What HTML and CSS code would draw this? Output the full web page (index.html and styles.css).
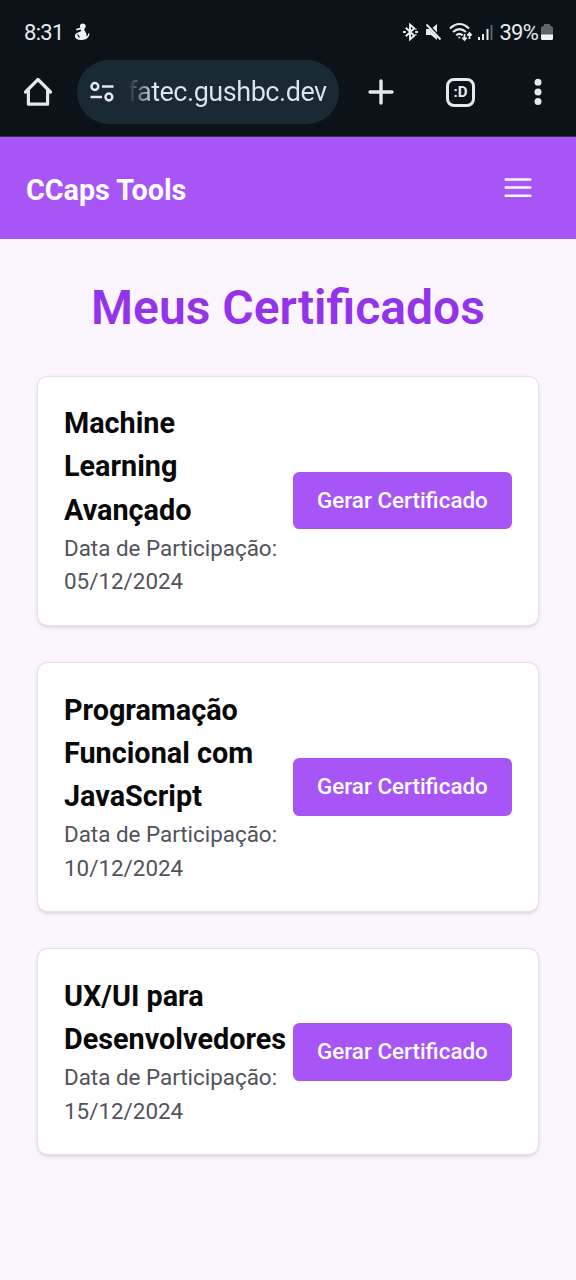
FILE: index.html
```html
<!DOCTYPE html>
<html lang="pt-BR">
<head>
<meta charset="utf-8">
<title>Meus Certificados</title>
<link rel="stylesheet" href="styles.css">
</head>
<body>
<div class="chrome">
  <div class="status">
    <span class="clock">8:31</span>
    <svg class="notif" width="16" height="18" viewBox="0 0 16 18" fill="#eef3f6"><circle cx="8.800" cy="3.200" r="2.800"/><path d="M6.500 4.500 2 6l.5 1.500L6.500 6.500 7.500 8 4 9.500C1.500 10 .5 12 1 14c.5 2 3 3 6 3 5 0 8-2 8.500-6.500l-1.200-.3C14 12 13.500 13 12.500 13.500c.5-3-1-4-2-6L10 5z"/><path d="m3.500 11.500 2 3" stroke="#0b1318" stroke-width="1.200"/></svg>
    <div class="indicators">
      <svg width="15" height="18" viewBox="0 0 16 18" fill="none" stroke="#e6ebef" stroke-width="2.100"><path d="m3 4.500 9 8.500-4.500 3.800V1.200L12 5l-9 8.500"/><path d="M0 9h3M13 9h3M13.500 5.500v1M13.500 11.500v1"/></svg>
      <svg width="17" height="18" viewBox="0 0 17 18"><path fill="#e6ebef" d="M1 6h5l6-5v16l-6-5H1z"/><path d="M1 0 17 17" stroke="#0b1318" stroke-width="3"/><path d="m1.500 1.500 14 15" stroke="#e6ebef" stroke-width="1.900"/></svg>
      <svg width="24" height="19" viewBox="0 0 24 19" fill="none" stroke="#e6ebef" stroke-width="2.100"><path d="M1 5.500C7-.3 14-.3 20 5.500M4 9c4.500-4 8.500-4 13 0M7.200 12.200c2.300-1.900 4.300-1.900 6.400 0"/><circle cx="10.300" cy="14.500" r="1" fill="#e6ebef" stroke="none"/><path stroke-width="1.700" d="M15.500 11v6m-2.200-2.300 2.200 2.300 2.200-2.300M20.500 16v-6m-2.200 2.300 2.200-2.300 2.200 2.300"/></svg>
      <svg class="signal" width="15" height="17" viewBox="0 0 15 17" fill="#e6ebef"><path d="M0 13h2v3H0zM4 10h2v6H4zM8.500 5h2v11h-2z"/><path fill="#596168" d="M12.500 1h2v15h-2z"/></svg>
      <span class="percent">39%</span>
      <svg width="12" height="18" viewBox="0 0 12 18"><path fill="#60666b" d="M3 1h6v2h1.500L12 4.500V12H0V4.500L1.500 3H3z"/><path fill="#f2f4f6" d="M0 11.500h12v4Q12 17 10.500 17h-9Q0 17 0 15.500z"/></svg>
    </div>
  </div>
  <div class="toolbar">
    <svg class="home" width="30" height="30" viewBox="0 0 30 30" fill="none" stroke="#e3e9ed" stroke-width="3.200" stroke-linejoin="round" stroke-linecap="round"><path d="M2.500 15 15 2.500 27.500 15M5.400 13.500v13.700h19.200V13.500"/></svg>
    <div class="address">
      <svg width="24" height="22" viewBox="0 0 24 22" fill="none" stroke="#e3e9ed" stroke-width="2.500"><circle cx="4.900" cy="5.500" r="3.400"/><path d="M12 5.500h11.500M.5 16H12"/><circle cx="18.900" cy="16" r="3.400"/></svg>
      <span class="url">fatec.gushbc.dev</span>
    </div>
    <svg class="plus" width="26" height="26" viewBox="0 0 26 26" stroke="#e3e9ed" stroke-width="3.400" stroke-linecap="round"><path d="M13 2v22M2 13h22"/></svg>
    <div class="tabs">:D</div>
    <svg class="dots" width="8" height="28" viewBox="0 0 8 28" fill="#e3e9ed"><circle cx="4" cy="4.200" r="3.500"/><circle cx="4" cy="14" r="3.500"/><circle cx="4" cy="23.600" r="3.500"/></svg>
  </div>
</div>
<header class="navbar">
  <span class="brand">CCaps Tools</span>
  <svg width="28" height="22" viewBox="0 0 28 22" stroke="#fff" stroke-width="2.500" stroke-linecap="round"><path d="M1.700 2.500h24.600M1.700 10.600h24.600M1.700 18.700h24.600"/></svg>
</header>
<main class="content">
  <h1 class="heading">Meus Certificados</h1>
  <div class="cards">
    <section class="card">
      <div class="info"><h2 class="title">Machine Learning Avançado</h2><p class="date">Data de Participação: 05/12/2024</p></div>
      <button class="action">Gerar Certificado</button>
    </section>
    <section class="card">
      <div class="info"><h2 class="title">Programação Funcional com JavaScript</h2><p class="date">Data de Participação: 10/12/2024</p></div>
      <button class="action">Gerar Certificado</button>
    </section>
    <section class="card">
      <div class="info"><h2 class="title">UX/UI para Desenvolvedores</h2><p class="date">Data de Participação: 15/12/2024</p></div>
      <button class="action">Gerar Certificado</button>
    </section>
  </div>
</main>
</body>
</html>
```
FILE: styles.css
```css
* { box-sizing: border-box; margin: 0; padding: 0; }
body { width: 576px; min-height: 1280px; background: #faf5ff; font-family: Roboto, sans-serif; }
svg { display: block; flex-shrink: 0; }
.chrome { height: 137px; background: #0b1318; border-bottom: 1px solid #34313f; color: #e6ebef; }
.status { height: 60px; padding: 4px 23px 0 24px; display: flex; align-items: center; }
.clock { font-size: 22px; letter-spacing: -0.7px; width: 50px; }
.indicators { margin-left: auto; display: flex; align-items: center; gap: 7px; }
.signal { margin-left: -2px; }
.percent { font-size: 22px; letter-spacing: -0.8px; margin-right: -4px; }
.toolbar { height: 64px; padding-left: 23px; display: flex; align-items: center; }
.address { width: 262px; height: 64px; margin-left: 24px; padding-left: 13px; border-radius: 32px; background: #1a2a33; display: flex; align-items: center; gap: 14px; }
.url { font-size: 27px; letter-spacing: -0.47px; white-space: nowrap; color: transparent; background: linear-gradient(90deg, #1a2a33 0, #dce5eb 26px); background-clip: text; -webkit-background-clip: text; }
.plus { margin-left: 29px; }
.tabs { width: 29px; height: 29px; margin-left: 52px; border: 3px solid #e3e9ed; border-radius: 8px; font: 700 15px/22px Roboto, sans-serif; text-align: center; }
.dots { margin-left: 59px; }
.navbar { height: 102px; padding: 0 44px 0 26px; display: flex; align-items: center; justify-content: space-between; background: #a855f7; }
.brand { color: #fff; font-size: 28.8px; font-weight: 700; letter-spacing: -0.05px; padding-top: 3px; }
.content { padding: 40px 38.4px 0; }
.heading { height: 57.6px; line-height: 57.6px; font-size: 48px; font-weight: 600; text-align: center; color: #9333ea; white-space: nowrap; }
.cards { margin-top: 40px; display: flex; flex-direction: column; gap: 38.4px; }
.card { padding: 25.6px; border-radius: 9.6px; background: #fff; display: flex; align-items: center; justify-content: space-between; box-shadow: 0 0 0 1px #e6e0eb, 0 1.6px 4.8px rgba(0,0,0,.1), 0 1.6px 3.2px rgba(0,0,0,.08); }
.info { width: 222px; }
.title { font-size: 28.8px; line-height: 43.2px; font-weight: 700; color: #09090b; }
.date { font-size: 22.4px; line-height: 33.6px; color: #52525b; }
.action { width: 219.2px; height: 57.6px; flex-shrink: 0; border: 0; border-radius: 6.4px; background: #a855f7; color: #fff; font: 500 22.4px/33.6px Roboto, sans-serif; white-space: nowrap; }
```
